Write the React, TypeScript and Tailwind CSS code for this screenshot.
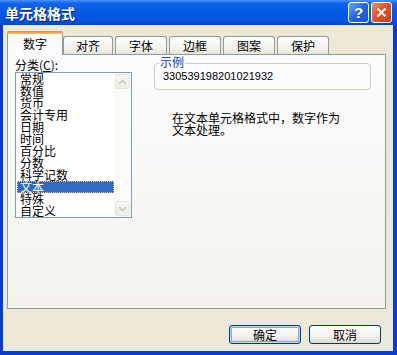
import React from "react";

const tabs = ["数字", "对齐", "字体", "边框", "图案", "保护"];
const tabWidths = [50, 52, 52, 52, 52];
const categories = ["常规", "数值", "货币", "会计专用", "日期", "时间", "百分比", "分数", "科学记数", "文本", "特殊", "自定义"];

const font = "font-['Noto_Sans_CJK_SC','Noto_Sans',sans-serif]";

const ScrollButton = ({ up }: { up: boolean }) => (
  <div className="w-[17px] h-[17px] p-px">
    <div className="w-full h-full rounded-[2px] border border-[#E8E6DD] bg-[linear-gradient(to_bottom,#F8F8F4,#EEEDE6)] flex items-center justify-center">
      <svg width="9" height="6" viewBox="0 0 9 6">
        <path
          d={up ? "M1 5 L4.5 1.5 L8 5" : "M1 1 L4.5 4.5 L8 1"}
          fill="none"
          stroke="#C9C7BA"
          strokeWidth={1.6}
        />
      </svg>
    </div>
  </div>
);

const XpButton = ({ label, isDefault }: { label: string; isDefault?: boolean }) => (
  <button
    className={`w-[72px] h-[19px] rounded-[3px] border border-[#003C74] bg-[linear-gradient(to_bottom,#FFFFFF,#F3F2EE_60%,#DCD9CE)] text-[12px] leading-[12px] text-black ${
      isDefault ? "shadow-[inset_0_0_0_1px_#C5D8F8,inset_0_0_0_2px_#86A4EE]" : ""
    }`}
  >
    {label}
  </button>
);

export default function App() {
  return (
    <div className={`w-[397px] h-[355px] flex flex-col bg-[#0A3BD6] ${font}`}>
      {/* Title bar */}
      <div className="h-[25px] flex items-center justify-between pl-[5px] pr-[5px] bg-[linear-gradient(to_bottom,#4A93F8_0%,#1466EE_12%,#0458E6_45%,#0254E2_80%,#0046CF_100%)]">
        <span className="text-white font-bold text-[14px] leading-[14px] [text-shadow:1px_1px_0_#0A1E7A]">单元格格式</span>
        <div className="flex gap-[2px]">
          <div className="w-[21px] h-[21px] rounded-[3px] border border-white bg-[linear-gradient(135deg,#6FA5FC,#2563E8_50%,#1A4FD8)] flex items-center justify-center text-white font-bold text-[15px] leading-[15px] font-['Liberation_Sans',sans-serif]">
            ?
          </div>
          <div className="w-[21px] h-[21px] rounded-[3px] border border-white bg-[linear-gradient(135deg,#F08A6A,#E0512A_50%,#C73D17)] flex items-center justify-center">
            <svg width="11" height="11" viewBox="0 0 11 11">
              <path d="M1.5 1.5 L9.5 9.5 M9.5 1.5 L1.5 9.5" stroke="white" strokeWidth={2} />
            </svg>
          </div>
        </div>
      </div>

      {/* Body */}
      <div className="flex-1 ml-[3px] mr-[4px] mb-[4px] bg-[#ECE9D8] flex flex-col">
        {/* Tabs */}
        <div className="flex items-end pl-[4px] pt-[6px] -mb-px relative z-10">
          <div className="w-[56px] h-[24px] bg-[#FCFCFE] border-x border-[#919B9C] rounded-t-[3px] flex flex-col">
            <div className="h-[3px] rounded-t-[2px] bg-[linear-gradient(to_bottom,#E68B2C,#FFC73C)] -mx-px" />
            <div className="flex-1 flex items-center justify-center text-[12px] leading-[12px] text-black pb-[2px]">
              {tabs[0]}
            </div>
          </div>
          {tabs.slice(1).map((t, i) => (
            <div
              key={t}
              style={{ width: tabWidths[i] }}
              className={`h-[18px] mb-px ${i === 0 ? "" : "ml-[2px]"} border-x border-t border-[#919B9C] rounded-t-[3px] bg-[linear-gradient(to_bottom,#FFFFFF,#F2F1EC_70%,#E6E4DC)] flex items-center justify-center text-[12px] leading-[12px] text-black`}
            >
              {t}
            </div>
          ))}
        </div>

        {/* Panel */}
        <div className="ml-[4px] w-[379px] h-[255px] border border-[#919B9C] bg-[linear-gradient(to_bottom,#FCFCFE,#F4F3EE)] flex pl-[7px] pt-[4px]">
          {/* Left column */}
          <div className="flex flex-col w-[117px]">
            <div className="text-[12px] leading-[12px] h-[13px] text-black">
              分类(<span className="underline">C</span>):
            </div>
            <div className="h-[146px] border border-[#7F9DB9] bg-white flex">
              <div className="flex-1 pl-px pt-0">
                {categories.map((c, i) => (
                  <div
                    key={c}
                    className={`h-[12px] text-[12px] leading-[12px] pl-[3px] whitespace-nowrap ${
                      i === 9 ? "bg-[#316AC5] text-white outline-1 outline-dotted outline-[#E0C07A] -outline-offset-1" : "text-black"
                    }`}
                  >
                    {c}
                  </div>
                ))}
              </div>
              <div className="w-[17px] flex flex-col justify-between bg-[#FBFBF8]">
                <ScrollButton up />
                <ScrollButton up={false} />
              </div>
            </div>
          </div>

          {/* Right column */}
          <div className="ml-[22px] flex flex-col pt-[4px]">
            <div className="relative w-[217px] h-[27px] rounded-[4px] border border-[#D0D0BF] pl-[8px] pt-[7px]">
              <span className="absolute left-[4px] -top-[8px] px-px bg-[#FCFCFE] text-[12px] leading-[12px] text-[#0046D5]">
                示例
              </span>
              <div className="text-[11px] leading-[11px] text-black font-['Liberation_Sans',sans-serif]">
                330539198201021932
              </div>
            </div>
            <div className="mt-[22px] ml-[18px] text-[12px] leading-[12px] text-black">
              在文本单元格格式中，数字作为
              <br />
              文本处理。
            </div>
          </div>
        </div>

        {/* Buttons */}
        <div className="flex justify-end gap-[8px] mt-[16px] mr-[12px]">
          <XpButton label="确定" isDefault />
          <XpButton label="取消" />
        </div>
      </div>
    </div>
  );
}
